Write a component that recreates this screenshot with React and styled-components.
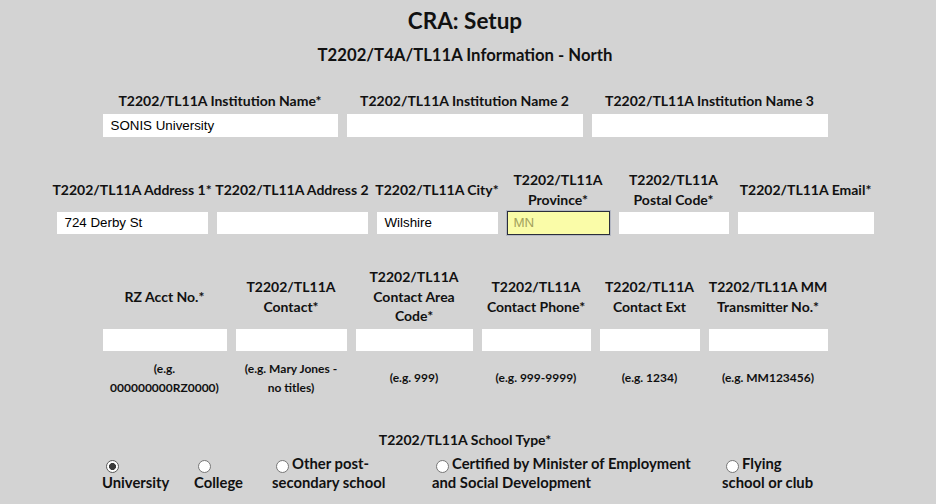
import React from "react";
import styled, { createGlobalStyle } from "styled-components";

const Global = createGlobalStyle`
  html, body { margin: 0; padding: 0; background: #d3d3d3; }
  body { font-family: Lato, "Open Sans", Arial, sans-serif; color: #111; }
`;

const Page = styled.div`
  width: 930px;
  display: flex;
  flex-direction: column;
  align-items: center;
`;

const Title = styled.h1`
  margin: 9px 0 0;
  font-size: 22.5px;
  line-height: 24px;
  font-weight: 700;
`;

const Subtitle = styled.h2`
  margin: 12px 0 0;
  font-size: 16.7px;
  line-height: 20px;
  font-weight: 700;
`;

const Row = styled.div`
  display: grid;
  grid-template-columns: ${(p) => p.$cols};
  column-gap: ${(p) => p.$gap || 9}px;
  margin-top: ${(p) => p.$top}px;
`;

const Field = styled.div`
  display: flex;
  flex-direction: column;
  align-items: stretch;
  min-width: 0;
`;

const Label = styled.div`
  height: ${(p) => p.$h}px;
  display: flex;
  align-items: center;
  justify-content: center;
  text-align: center;
  font-size: 14px;
  line-height: 19.5px;
  font-weight: 700;
  white-space: nowrap;
  margin: 0 -10px 3.5px;
`;

const Input = styled.div`
  box-sizing: border-box;
  height: ${(p) => p.$h || 22}px;
  background: #fff;
  font-family: "Liberation Sans", Arial, sans-serif;
  font-size: 13.33px;
  line-height: ${(p) => p.$h || 22}px;
  padding-left: 8px;
  color: #000;
  white-space: nowrap;
  overflow: hidden;
`;

const FocusInput = styled(Input)`
  background: #fafca8;
  border: 1px solid #2b2e3a;
  box-shadow: 0 0 0 1px #b4b8c4;
  color: #a3a25c;
  line-height: 22px;
  padding-left: 6px;
  height: 24px;
  margin-top: -1px;
  margin-bottom: -1px;
`;

const Hint = styled.div`
  height: 38px;
  margin: 7.5px -4px 0;
  display: flex;
  align-items: center;
  justify-content: center;
  text-align: center;
  font-size: 12px;
  line-height: 19px;
  font-weight: 700;
  white-space: nowrap;
`;

const GroupTitle = styled.div`
  margin-top: 33px;
  font-size: 14px;
  line-height: 19px;
  font-weight: 700;
`;

const Options = styled.div`
  display: flex;
  gap: 8px;
  margin-top: 5px;
`;

const Option = styled.label`
  display: block;
  width: ${(p) => p.$w}px;
  font-size: 14.8px;
  line-height: 19px;
  font-weight: 700;
  white-space: nowrap;
`;

const Radio = styled.span`
  display: inline-block;
  box-sizing: border-box;
  width: 13px;
  height: 13px;
  border-radius: 50%;
  border: 1px solid ${(p) => (p.$checked ? "#5a5a5a" : "#767676")};
  background: ${(p) =>
    p.$checked
      ? "radial-gradient(circle, #3a3a3a 0 3.2px, #fff 3.8px)"
      : "#fff"};
  vertical-align: -4px;
  margin: 0 3px 0 4px;
`;

const Lines = ({ lines }) =>
  lines.map((l, i) => (
    <React.Fragment key={i}>
      {i > 0 && <br />}
      {l}
    </React.Fragment>
  ));

const row2 = [
  { label: ["T2202/TL11A Address 1*"], value: "724 Derby St" },
  { label: ["T2202/TL11A Address 2"] },
  { label: ["T2202/TL11A City*"], value: "Wilshire" },
  { label: ["T2202/TL11A", "Province*"], value: "MN", focus: true },
  { label: ["T2202/TL11A", "Postal Code*"] },
  { label: ["T2202/TL11A Email*"] },
];

const row3 = [
  { label: ["RZ Acct No.*"], hint: ["(e.g.", "000000000RZ0000)"] },
  { label: ["T2202/TL11A", "Contact*"], hint: ["(e.g. Mary Jones -", "no titles)"] },
  { label: ["T2202/TL11A", "Contact Area", "Code*"], hint: ["(e.g. 999)"] },
  { label: ["T2202/TL11A", "Contact Phone*"], hint: ["(e.g. 999-9999)"] },
  { label: ["T2202/TL11A", "Contact Ext"], hint: ["(e.g. 1234)"] },
  { label: ["T2202/TL11A MM", "Transmitter No.*"], hint: ["(e.g. MM123456)"] },
];

const options = [
  { w: 84, first: "", second: "University", checked: true },
  { w: 70, first: "", second: "College" },
  { w: 152, first: "Other post-", second: "secondary school" },
  { w: 282, first: "Certified by Minister of Employment", second: "and Social Development" },
  { w: 106, first: "Flying", second: "school or club" },
];

export default function App() {
  return (
    <Page>
      <Global />
      <Title>CRA: Setup</Title>
      <Subtitle>T2202/T4A/TL11A Information - North</Subtitle>

      <Row $cols="235px 236px 236px" $top={26.5}>
        <Field>
          <Label $h={19}>T2202/TL11A Institution Name*</Label>
          <Input $h={23}>SONIS University</Input>
        </Field>
        <Field>
          <Label $h={19}>T2202/TL11A Institution Name 2</Label>
          <Input $h={23} />
        </Field>
        <Field>
          <Label $h={19}>T2202/TL11A Institution Name 3</Label>
          <Input $h={23} />
        </Field>
      </Row>

      <Row $cols="151px 151px 121px 103px 110px 136px" $top={33.5}>
        {row2.map((f, i) => (
          <Field key={i}>
            <Label $h={38}>
              <span><Lines lines={f.label} /></span>
            </Label>
            {f.focus ? <FocusInput>{f.value}</FocusInput> : <Input>{f.value}</Input>}
          </Field>
        ))}
      </Row>

      <Row $cols="124px 111px 117px 109px 100px 119px" $top={33.5}>
        {row3.map((f, i) => (
          <Field key={i}>
            <Label $h={58}>
              <span><Lines lines={f.label} /></span>
            </Label>
            <Input />
            <Hint>
              <span><Lines lines={f.hint} /></span>
            </Hint>
          </Field>
        ))}
      </Row>

      <GroupTitle>T2202/TL11A School Type*</GroupTitle>
      <Options>
        {options.map((o, i) => (
          <Option key={i} $w={o.w}>
            <Radio $checked={o.checked} />
            {o.first}
            <br />
            {o.second}
          </Option>
        ))}
      </Options>
    </Page>
  );
}
